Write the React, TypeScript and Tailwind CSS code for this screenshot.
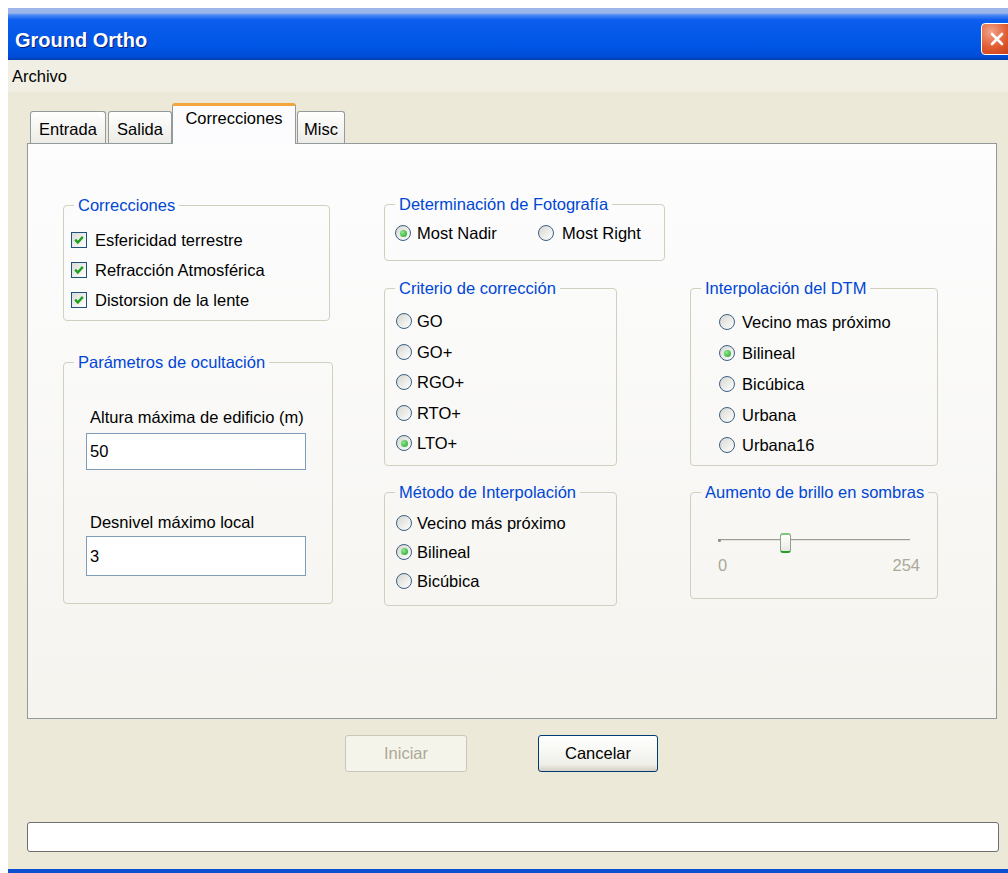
import React from 'react'

// casilla de verificación estilo XP
const CheckBox = () => (
    <span className="flex h-[16px] w-[16px] shrink-0 items-center justify-center border border-[#1c5180] bg-[linear-gradient(135deg,#dcdcd5,#ffffff)]">
        <svg width="12" height="12" viewBox="0 0 11 11">
            <path d="M2 5.2 L4.4 7.8 L9 2.6" fill="none" stroke="#21a121" strokeWidth="2.2" />
        </svg>
    </span>
)

// botón de opción estilo XP
const Radio = ({ checked = false }: { checked?: boolean }) => (
    <span className="flex h-[16px] w-[16px] shrink-0 items-center justify-center rounded-full border border-[#3a5f86] bg-[linear-gradient(135deg,#d6d6d0,#ffffff)]">
        {checked && (
            <span className="h-[7px] w-[7px] rounded-full bg-[radial-gradient(circle_at_35%_35%,#8ce88c,#21a121)]" />
        )}
    </span>
)

const GroupBox = ({
    title,
    className,
    children
}: {
    title: string
    className: string
    children: React.ReactNode
}) => (
    <fieldset className={`rounded-[4px] border border-[#d0d0bf] ${className}`}>
        <legend className="ml-[10px] px-[4px] text-[16.5px] leading-[18px] text-[#0046d5]">{title}</legend>
        {children}
    </fieldset>
)

const RadioRow = ({
    label,
    checked,
    rowClass,
    gapClass
}: {
    label: string
    checked?: boolean
    rowClass: string
    gapClass: string
}) => (
    <div className={`flex items-center ${rowClass} ${gapClass}`}>
        <Radio checked={checked} />
        <span className="leading-[18px]">{label}</span>
    </div>
)

const tabs = ['Entrada', 'Salida', 'Correcciones', 'Misc']

export default function App() {
    return (
        <div className="h-[873px] w-[1008px] overflow-hidden bg-white pl-[8px] pt-[8px] font-['Liberation_Sans',Arial,sans-serif] text-[16.5px] text-black">
            <div className="flex h-[865px] w-[1000px] flex-col bg-[#ece9d8]">
                {/* barra de título */}
                <div className="flex h-[52px] shrink-0 items-start justify-between overflow-hidden bg-[linear-gradient(to_bottom,#9cb6ea_0px,#9cb6ea_5px,#4a88f4_7px,#0c5ded_12px,#0056e6_38px,#004bd6_49px,#003caf_52px)]">
                    <span className="ml-[7px] mt-[20px] text-[20px] font-bold leading-[24px] text-white [text-shadow:1px_1px_#0a1f7a]">
                        Ground Ortho
                    </span>
                    <span className="-mr-[5px] mt-[15px] flex h-[32px] w-[32px] items-center justify-center rounded-[4px] border border-white bg-[radial-gradient(circle_at_30%_25%,#f2a188,#df5a2e_55%,#c53a15)]">
                        <svg width="16" height="16" viewBox="0 0 16 16">
                            <path d="M3 3 L13 13 M13 3 L3 13" stroke="#ffffff" strokeWidth="2.6" strokeLinecap="round" />
                        </svg>
                    </span>
                </div>

                {/* menú */}
                <div className="h-[32px] shrink-0 bg-[#f1efe3] pl-[4px] leading-[32px]">Archivo</div>

                {/* pestañas */}
                <div className="relative z-10 -mb-px flex items-end pl-[22px] pt-[11px]">
                    {tabs.map((t) =>
                        t === 'Correcciones' ? (
                            <div
                                key={t}
                                className="flex h-[41px] w-[124px] justify-center rounded-t-[3px] border-x border-[#919b9c] border-t-[3px] border-t-[#f2a53c] bg-[#fcfcfe] pt-[3px] leading-[18px]"
                            >
                                {t}
                            </div>
                        ) : (
                            <div
                                key={t}
                                className={`mb-px flex h-[32px] justify-center rounded-t-[3px] border-x border-t border-[#919b9c] bg-[linear-gradient(to_bottom,#ffffff,#ecebe6)] pt-[8px] leading-[18px] ${
                                    t === 'Entrada' ? 'mr-[2px] w-[76px]' : t === 'Salida' ? 'w-[64px]' : 'ml-px w-[48px]'
                                }`}
                            >
                                {t}
                            </div>
                        )
                    )}
                </div>

                {/* página de la pestaña */}
                <div className="ml-[19px] flex h-[576px] w-[970px] shrink-0 border border-[#919b9c] bg-[linear-gradient(to_bottom,#fdfdfe,#f5f4ef)] pl-[35px]">
                    {/* columna izquierda */}
                    <div className="flex w-[270px] flex-col">
                        <GroupBox title="Correcciones" className="mt-[52px] h-[125px] w-[267px]">
                            <div className="flex flex-col pl-[7px] pt-[11px]">
                                {['Esfericidad terrestre', 'Refracción Atmosférica', 'Distorsion de la lente'].map((l) => (
                                    <div key={l} className="flex h-[30px] items-center gap-[8px]">
                                        <CheckBox />
                                        <span className="leading-[18px]">{l}</span>
                                    </div>
                                ))}
                            </div>
                        </GroupBox>

                        <GroupBox title="Parámetros de ocultación" className="mt-[32px] h-[251px] w-[270px]">
                            <div className="flex flex-col pl-[26px] pt-[36px]">
                                <span className="leading-[20px]">Altura máxima de edificio (m)</span>
                                <input
                                    readOnly
                                    defaultValue="50"
                                    className="-ml-[4px] mt-[6px] h-[37px] w-[220px] border border-[#7f9db9] bg-white pl-[3px] outline-none"
                                />
                                <span className="mt-[42px] leading-[20px]">Desnivel máximo local</span>
                                <input
                                    readOnly
                                    defaultValue="3"
                                    className="-ml-[4px] mt-[4px] h-[40px] w-[220px] border border-[#7f9db9] bg-white pl-[3px] outline-none"
                                />
                            </div>
                        </GroupBox>
                    </div>

                    {/* columna central */}
                    <div className="ml-[51px] flex w-[306px] flex-col">
                        <GroupBox title="Determinación de Fotografía" className="mt-[51px] h-[66px] w-[281px]">
                            <div className="mt-[5px] flex h-[30px] items-center pl-[10px]">
                                <RadioRow label="Most Nadir" checked rowClass="w-[143px]" gapClass="gap-[6px]" />
                                <RadioRow label="Most Right" rowClass="" gapClass="gap-[8px]" />
                            </div>
                        </GroupBox>

                        <GroupBox title="Criterio de corrección" className="mt-[18px] h-[187px] w-[233px]">
                            <div className="flex flex-col pl-[11px] pt-[9px]">
                                {['GO', 'GO+', 'RGO+', 'RTO+', 'LTO+'].map((l) => (
                                    <RadioRow key={l} label={l} checked={l === 'LTO+'} rowClass="h-[30.5px]" gapClass="gap-[5px]" />
                                ))}
                            </div>
                        </GroupBox>

                        <GroupBox title="Método de Interpolación" className="mt-[17px] h-[123px] w-[233px]">
                            <div className="flex flex-col pl-[11px] pt-[7px]">
                                {['Vecino más próximo', 'Bilineal', 'Bicúbica'].map((l) => (
                                    <RadioRow key={l} label={l} checked={l === 'Bilineal'} rowClass="h-[29px]" gapClass="gap-[5px]" />
                                ))}
                            </div>
                        </GroupBox>
                    </div>

                    {/* columna derecha */}
                    <div className="flex w-[248px] flex-col">
                        <GroupBox title="Interpolación del DTM" className="mt-[135px] h-[187px] w-[248px]">
                            <div className="flex flex-col pl-[28px] pt-[10px]">
                                {['Vecino mas próximo', 'Bilineal', 'Bicúbica', 'Urbana', 'Urbana16'].map((l) => (
                                    <RadioRow key={l} label={l} checked={l === 'Bilineal'} rowClass="h-[30.75px]" gapClass="gap-[7px]" />
                                ))}
                            </div>
                        </GroupBox>

                        <GroupBox title="Aumento de brillo en sombras" className="mt-[17px] h-[116px] w-[248px]">
                            <div className="relative ml-[27px] mt-[32px] h-[20px] w-[192px]">
                                {/* pista */}
                                <div className="absolute left-0 right-0 top-[6px] h-[2px] border-t border-[#9d9d96] bg-[#e4e3dc]" />
                                <div className="absolute left-0 top-[6px] h-[3px] w-[3px] rounded-full bg-[#8a8a84]" />
                                {/* cursor */}
                                <div className="absolute left-[62px] top-0 h-[20px] w-[11px] rounded-[3px] border border-[#8ea08e] border-y-2 border-t-[#7cc47c] border-b-[#21a121] bg-[linear-gradient(to_bottom,#ffffff,#e8e8e2)]" />
                            </div>
                            <div className="ml-[27px] mt-[3px] flex w-[202px] justify-between leading-[18px] text-[#aca899]">
                                <span>0</span>
                                <span>254</span>
                            </div>
                        </GroupBox>
                    </div>
                </div>

                {/* botones */}
                <div className="mt-[16px] flex h-[37px] shrink-0 pl-[337px]">
                    <div className="flex h-[37px] w-[122px] items-center justify-center rounded-[3px] border border-[#c9c7ba] bg-[#f5f4ea] text-[#aca899]">
                        Iniciar
                    </div>
                    <div className="ml-[71px] flex h-[37px] w-[120px] items-center justify-center rounded-[3px] border border-[#003c74] bg-[linear-gradient(to_bottom,#ffffff,#f0f0ea_80%,#d6d0c5)]">
                        Cancelar
                    </div>
                </div>

                {/* barra de progreso */}
                <div className="ml-[19px] mt-[50px] h-[30px] w-[972px] shrink-0 rounded-[3px] border border-[#6f6f6f] bg-white" />

                <div className="mt-auto h-[4px] shrink-0 bg-[#0c4fd0]" />
            </div>
        </div>
    )
}
